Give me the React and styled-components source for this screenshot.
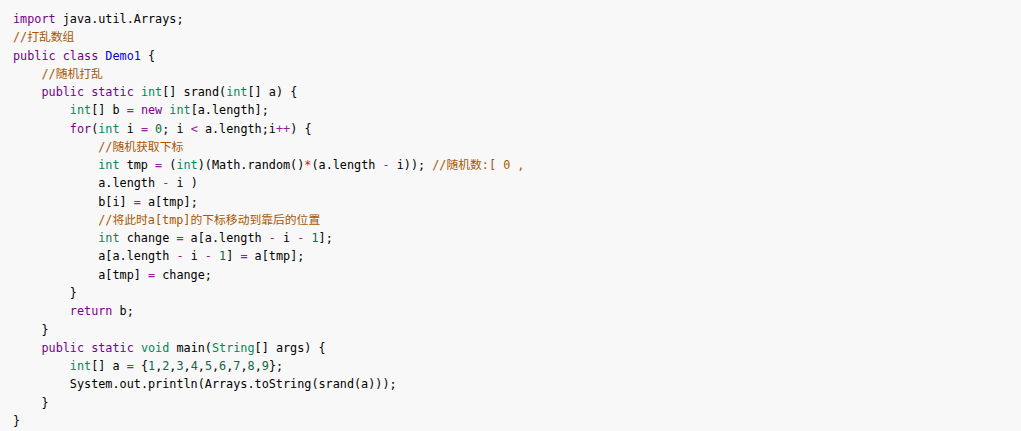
import React from "react";
import styled, { createGlobalStyle } from "styled-components";

const GlobalStyle = createGlobalStyle`
  body {
    margin: 0;
    background: #f8f8f8;
  }
`;

const source = `import java.util.Arrays;
//打乱数组
public class Demo1 {
    //随机打乱
    public static int[] srand(int[] a) {
        int[] b = new int[a.length];
        for(int i = 0; i < a.length;i++) {
            //随机获取下标
            int tmp = (int)(Math.random()*(a.length - i)); //随机数:[ 0 ,
            a.length - i )
            b[i] = a[tmp];
            //将此时a[tmp]的下标移动到靠后的位置
            int change = a[a.length - i - 1];
            a[a.length - i - 1] = a[tmp];
            a[tmp] = change;
        }
        return b;
    }
    public static void main(String[] args) {
        int[] a = {1,2,3,4,5,6,7,8,9};
        System.out.println(Arrays.toString(srand(a)));
    }
}`;

const KEYWORDS = ["import", "public", "class", "static", "new", "for", "return"];
const TYPES = ["int", "void", "String"];

// very small tokenizer, enough for this snippet
const tokenize = (line) => {
  const out = [];
  const re = /(\/\/.*$)|([A-Za-z_][A-Za-z0-9_]*)|(\d+)|(\+\+|[=<\-+])|(\*)|(\s+|.)/g;
  let m;
  while ((m = re.exec(line)) !== null) {
    if (m[1]) out.push(["comment", m[1]]);
    else if (m[2]) {
      if (KEYWORDS.includes(m[2])) out.push(["keyword", m[2]]);
      else if (TYPES.includes(m[2])) out.push(["type", m[2]]);
      else if (m[2] === "Demo1") out.push(["def", m[2]]);
      else out.push(["plain", m[2]]);
    } else if (m[3]) out.push(["number", m[3]]);
    else if (m[4]) out.push(["operator", m[4]]);
    else if (m[5]) out.push(["star", m[5]]);
    else out.push(["plain", m[6]]);
  }
  return out;
};

const colors = {
  comment: "#aa5500",
  keyword: "#770088",
  type: "#008855",
  def: "#0000ff",
  number: "#116644",
  operator: "#981a9a",
  star: "#c41a16",
  plain: "#000000",
};

const App = () => {
  const lines = source.split("\n");
  return (
    <>
      <GlobalStyle />
      <CodeBlock>
        {lines.map((line, i) => (
          <Line key={i}>
            {tokenize(line).map(([kind, text], j) => (
              <Token key={j} $kind={kind}>
                {text}
              </Token>
            ))}
          </Line>
        ))}
      </CodeBlock>
    </>
  );
};

export default App;

const CodeBlock = styled.pre`
  margin: 0;
  padding: 10px 13px;
  background: #f8f8f8;
  font-family: "DejaVu Sans Mono", "Noto Sans CJK SC", monospace;
  font-size: 11.8px;
  line-height: 18.27px;
  color: #000;
  min-height: 431px;
  box-sizing: border-box;
`;

const Line = styled.div`
  white-space: pre;
  height: 18.27px;
`;

const Token = styled.span`
  color: ${(props) => colors[props.$kind]};
`;
